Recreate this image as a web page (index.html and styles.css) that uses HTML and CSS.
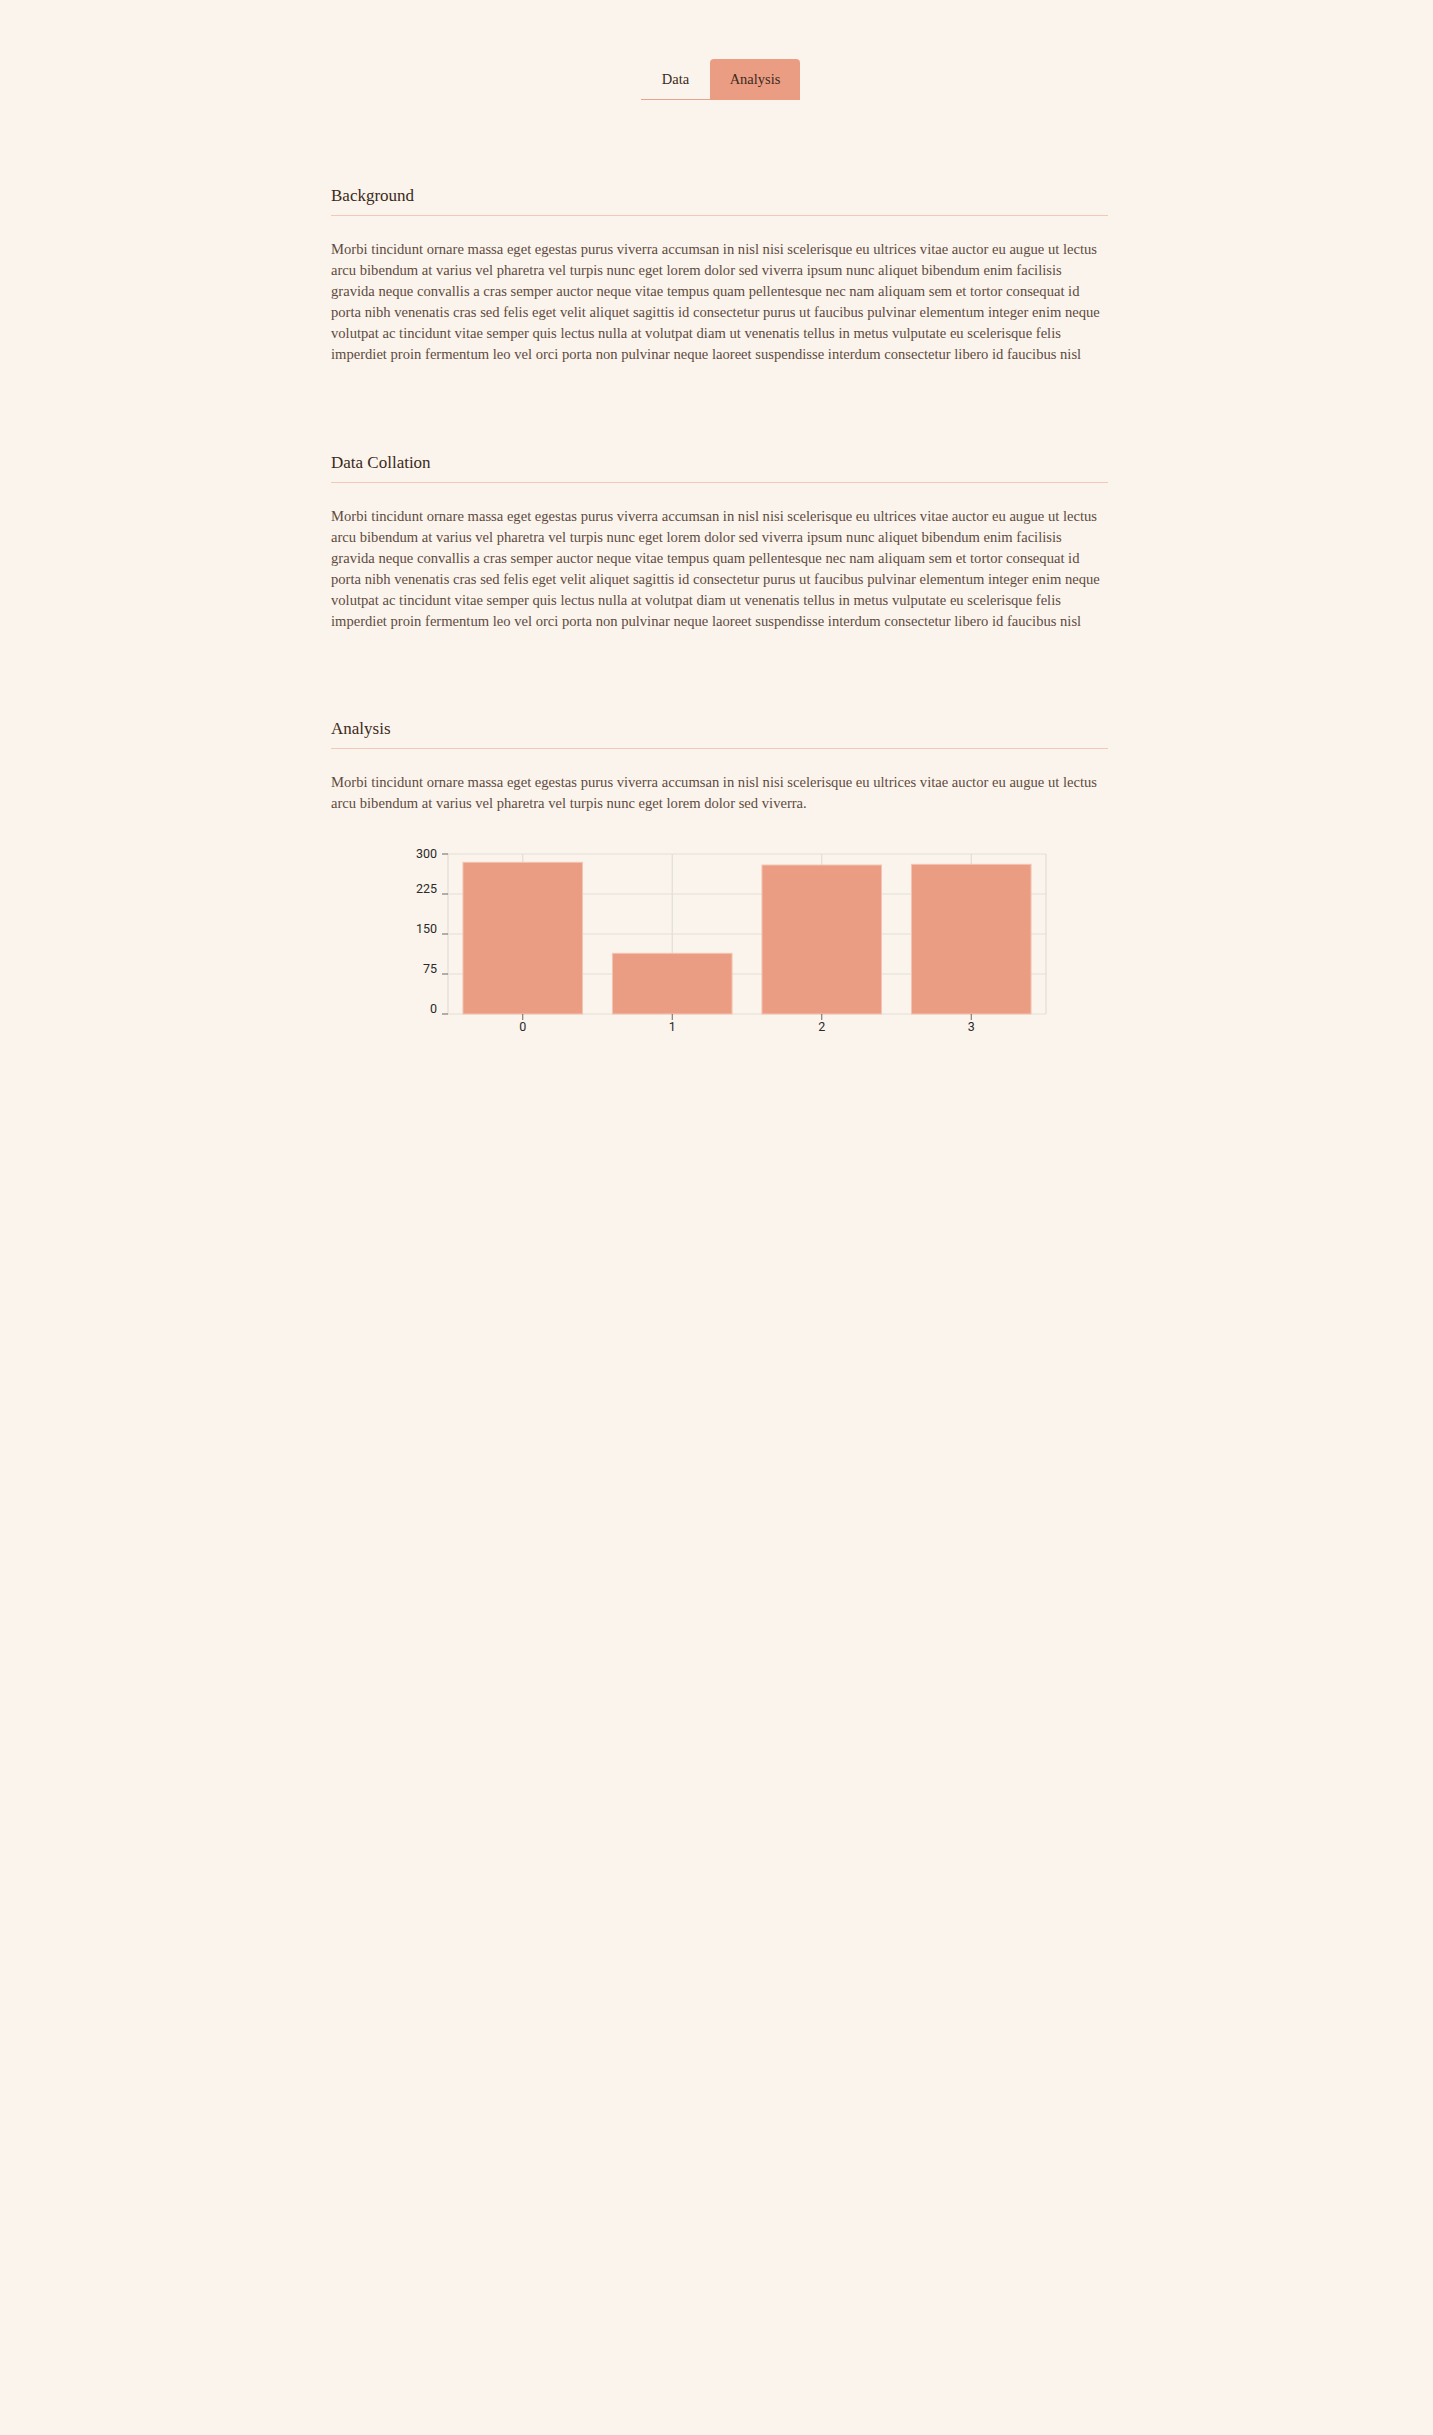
FILE: index.html
```html
<!DOCTYPE html>
<html lang="en">
<head>
<meta charset="utf-8">
<title>Report</title>
<link rel="stylesheet" href="styles.css">
</head>
<body>
<div class="page">
  <nav class="tabs">
    <button class="tab">Data</button>
    <button class="tab tab-active">Analysis</button>
  </nav>

  <section class="section">
    <h2 class="section-title">Background</h2>
    <p class="section-text">Morbi tincidunt ornare massa eget egestas purus viverra accumsan in nisl nisi scelerisque eu ultrices vitae auctor eu augue ut lectus arcu bibendum at varius vel pharetra vel turpis nunc eget lorem dolor sed viverra ipsum nunc aliquet bibendum enim facilisis gravida neque convallis a cras semper auctor neque vitae tempus quam pellentesque nec nam aliquam sem et tortor consequat id porta nibh venenatis cras sed felis eget velit aliquet sagittis id consectetur purus ut faucibus pulvinar elementum integer enim neque volutpat ac tincidunt vitae semper quis lectus nulla at volutpat diam ut venenatis tellus in metus vulputate eu scelerisque felis imperdiet proin fermentum leo vel orci porta non pulvinar neque laoreet suspendisse interdum consectetur libero id faucibus nisl</p>
  </section>

  <section class="section">
    <h2 class="section-title">Data Collation</h2>
    <p class="section-text">Morbi tincidunt ornare massa eget egestas purus viverra accumsan in nisl nisi scelerisque eu ultrices vitae auctor eu augue ut lectus arcu bibendum at varius vel pharetra vel turpis nunc eget lorem dolor sed viverra ipsum nunc aliquet bibendum enim facilisis gravida neque convallis a cras semper auctor neque vitae tempus quam pellentesque nec nam aliquam sem et tortor consequat id porta nibh venenatis cras sed felis eget velit aliquet sagittis id consectetur purus ut faucibus pulvinar elementum integer enim neque volutpat ac tincidunt vitae semper quis lectus nulla at volutpat diam ut venenatis tellus in metus vulputate eu scelerisque felis imperdiet proin fermentum leo vel orci porta non pulvinar neque laoreet suspendisse interdum consectetur libero id faucibus nisl</p>
  </section>

  <section class="section">
    <h2 class="section-title">Analysis</h2>
    <p class="section-text">Morbi tincidunt ornare massa eget egestas purus viverra accumsan in nisl nisi scelerisque eu ultrices vitae auctor eu augue ut lectus arcu bibendum at varius vel pharetra vel turpis nunc eget lorem dolor sed viverra.</p>
    <svg class="chart" width="777" height="200" viewBox="0 0 777 200">
      <g class="grid">
        <line x1="117" y1="10" x2="715" y2="10"/>
        <line x1="117" y1="50" x2="715" y2="50"/>
        <line x1="117" y1="90" x2="715" y2="90"/>
        <line x1="117" y1="130" x2="715" y2="130"/>
        <line x1="117" y1="170" x2="715" y2="170"/>
        <line x1="191.75" y1="10" x2="191.75" y2="170"/>
        <line x1="341.25" y1="10" x2="341.25" y2="170"/>
        <line x1="490.75" y1="10" x2="490.75" y2="170"/>
        <line x1="640.25" y1="10" x2="640.25" y2="170"/>
        <line x1="117" y1="10" x2="117" y2="170"/>
        <line x1="715" y1="10" x2="715" y2="170"/>
      </g>
      <g class="bars">
        <rect x="131.95" y="18.3" width="119.6" height="151.7"/>
        <rect x="281.45" y="109.3" width="119.6" height="60.7"/>
        <rect x="430.95" y="21" width="119.6" height="149"/>
        <rect x="580.45" y="20.3" width="119.6" height="149.7"/>
      </g>
      <g class="ticks">
        <line x1="111" y1="10" x2="117" y2="10"/>
        <line x1="111" y1="50" x2="117" y2="50"/>
        <line x1="111" y1="90" x2="117" y2="90"/>
        <line x1="111" y1="130" x2="117" y2="130"/>
        <line x1="111" y1="170" x2="117" y2="170"/>
        <line x1="191.75" y1="170" x2="191.75" y2="176"/>
        <line x1="341.25" y1="170" x2="341.25" y2="176"/>
        <line x1="490.75" y1="170" x2="490.75" y2="176"/>
        <line x1="640.25" y1="170" x2="640.25" y2="176"/>
      </g>
      <g class="y-labels">
        <text x="106" y="13.5">300</text>
        <text x="106" y="49">225</text>
        <text x="106" y="89">150</text>
        <text x="106" y="129">75</text>
        <text x="106" y="169">0</text>
      </g>
      <g class="x-labels">
        <text x="191.75" y="187">0</text>
        <text x="341.25" y="187">1</text>
        <text x="490.75" y="187">2</text>
        <text x="640.25" y="187">3</text>
      </g>
    </svg>
  </section>
</div>
</body>
</html>
```

FILE: styles.css
```css
html {
  background: #fbf4ec;
}

body {
  margin: 0;
  min-height: 2435px;
  background: #fbf4ec;
  font-family: "Liberation Serif", "Times New Roman", serif;
  color: #3b2a20;
}

.page {
  width: 777px;
  margin-left: 331px;
  padding-top: 59px;
}

.tabs {
  display: flex;
  justify-content: center;
  margin-bottom: 84px;
  padding-left: 2px;
}

.tab {
  height: 41px;
  border: none;
  background: transparent;
  font-family: "Liberation Serif", "Times New Roman", serif;
  font-size: 14.5px;
  line-height: 40px;
  color: #3b2a20;
  padding: 0;
  margin: 0;
  cursor: pointer;
}

.tab:first-child {
  width: 69px;
  border-bottom: 1px solid #e7a38d;
}

.tab-active {
  width: 90px;
  background: #eb9d84;
  border-radius: 4px 4px 0 0;
  padding-bottom: 1px;
}

.section {
  margin-bottom: 85.5px;
}

.section-title {
  margin: 0;
  font-size: 17px;
  font-weight: normal;
  line-height: 24px;
  padding-bottom: 7px;
  border-bottom: 1px solid #f3c8b5;
  color: #3b2a20;
}

.section-text {
  margin: 23px 0 0;
  font-size: 14.6px;
  line-height: 21px;
  color: #5e4b41;
}

.chart {
  display: block;
  margin-top: 30px;
  overflow: visible;
}

.grid line {
  stroke: #e2ddd5;
  stroke-width: 1.2;
}

.bars rect {
  fill: #eb9d84;
  stroke: #f3c5b3;
  stroke-width: 1;
}

.ticks line {
  stroke: #6b6661;
  stroke-width: 1;
}

.y-labels text,
.x-labels text {
  font-family: Roboto, "Liberation Sans", sans-serif;
  font-size: 12.5px;
  fill: #2a2a2a;
}

.y-labels text {
  text-anchor: end;
}

.x-labels text {
  text-anchor: middle;
}
```
